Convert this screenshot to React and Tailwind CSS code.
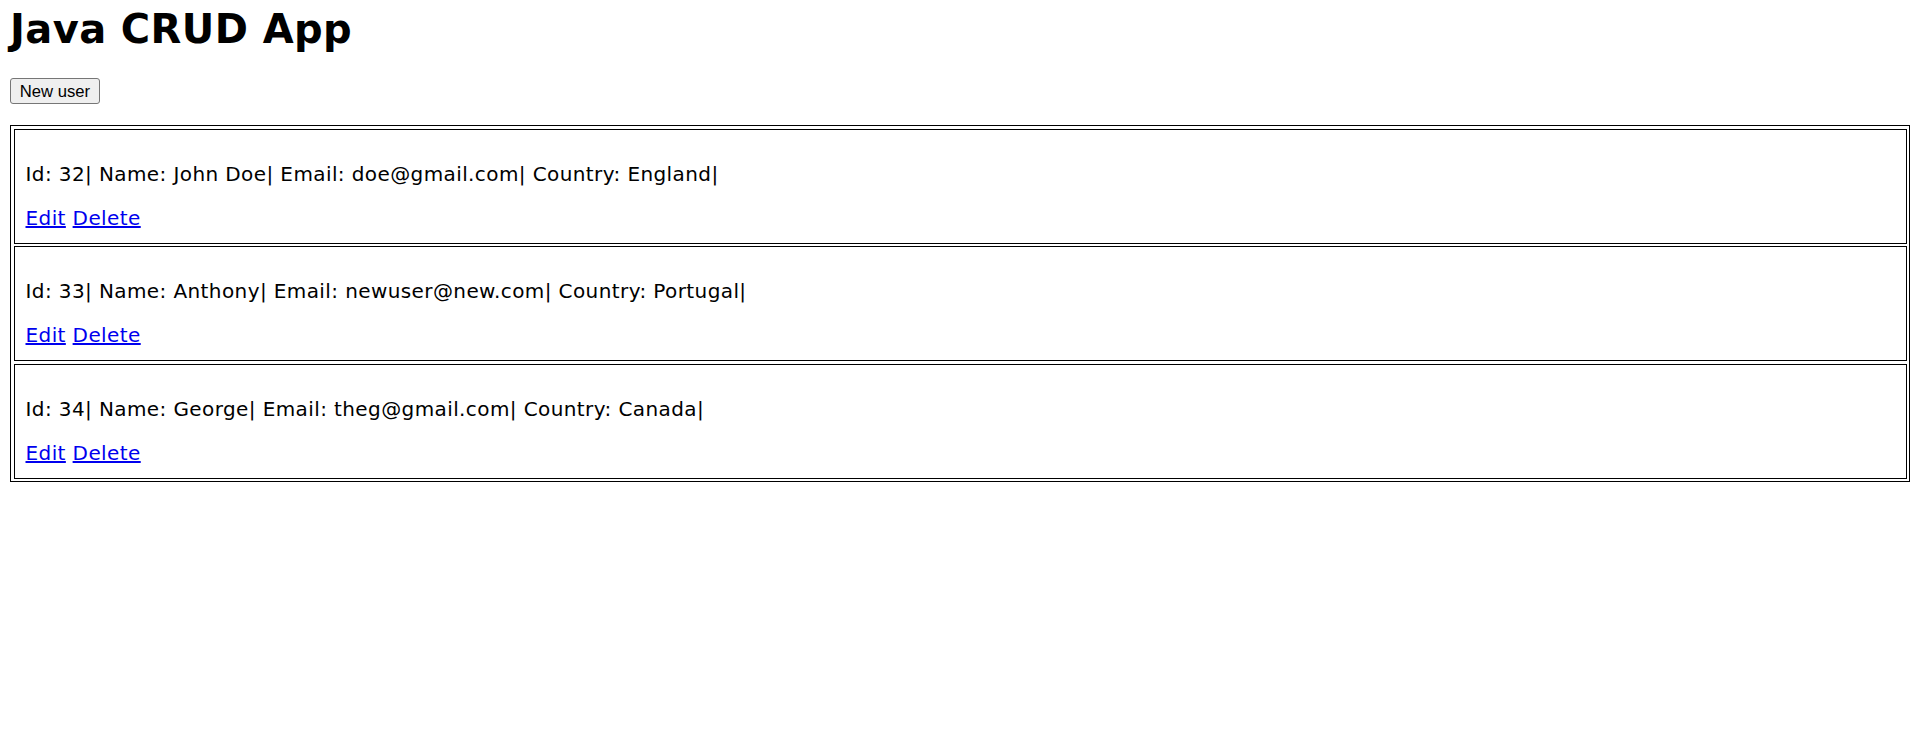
const users = [
  { id: 32, name: 'John Doe', email: 'doe@gmail.com', country: 'England' },
  { id: 33, name: 'Anthony', email: 'newuser@new.com', country: 'Portugal' },
  { id: 34, name: 'George', email: 'theg@gmail.com', country: 'Canada' }
];

export default function App() {
  return (
    <div className="min-h-screen bg-white px-[10px] text-black font-['DejaVu_Sans',Verdana,sans-serif]">
      <h1 className="pt-[5px] text-[40px] leading-[48px] font-bold tracking-[0.4px]">Java CRUD App</h1>

      <div className="mt-[25px]">
        <button className="w-[90px] h-[26px] bg-[#efefef] border border-[#767676] rounded-[3px] text-[16.67px] font-['Liberation_Sans',Arial,sans-serif] text-black hover:bg-[#e5e5e5]">
          New user
        </button>
      </div>

      <div className="mt-[21px] border border-black p-[2.5px] flex flex-col gap-[2.5px]">
        {users.map((u) => (
          <div key={u.id} className="h-[115px] border border-black pt-[32px] pl-[11px] text-[20px] leading-[24px] tracking-[0.4px]">
            <p>
              Id: {u.id}| Name: {u.name}| Email: {u.email}| Country: {u.country}|
            </p>
            <p className="mt-[20px]">
              <a href="#" className="text-[#0000ee] underline">Edit</a>{' '}
              <a href="#" className="text-[#0000ee] underline">Delete</a>
            </p>
          </div>
        ))}
      </div>
    </div>
  );
}
